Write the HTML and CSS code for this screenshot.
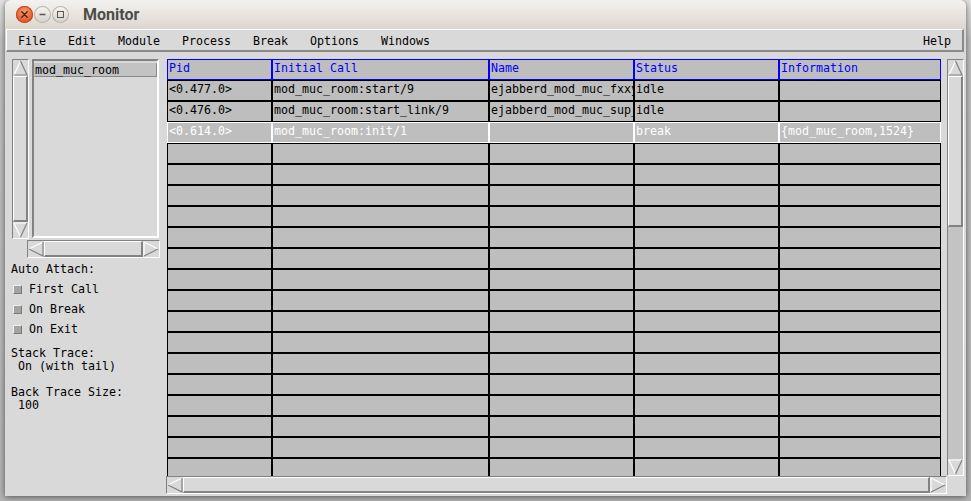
FILE: index.html
```html
<!DOCTYPE html>
<html>
<head>
<meta charset="utf-8">
<title>Monitor</title>
<link rel="stylesheet" href="styles.css">
</head>
<body>
<div class="window">
  <div class="titlebar">
    <span class="wbtn close"><svg width="17" height="17" viewBox="0 0 17 17"><path d="M5.8 5.8 L11.2 11.2 M11.2 5.8 L5.8 11.2" stroke="#4a2414" stroke-width="1.4" stroke-linecap="round"/></svg></span>
    <span class="wbtn"><svg width="17" height="17" viewBox="0 0 17 17"><path d="M5.5 8.5 H11.5" stroke="#5b5853" stroke-width="1.3"/></svg></span>
    <span class="wbtn"><svg width="17" height="17" viewBox="0 0 17 17"><rect x="5.5" y="5.5" width="6" height="6" fill="none" stroke="#5b5853" stroke-width="1"/></svg></span>
    <span class="title">Monitor</span>
  </div>
  <div class="menubar">
    <span class="mi">File</span>
    <span class="mi">Edit</span>
    <span class="mi">Module</span>
    <span class="mi">Process</span>
    <span class="mi">Break</span>
    <span class="mi">Options</span>
    <span class="mi">Windows</span>
    <span class="mi help">Help</span>
  </div>
  <div class="main">
    <div class="left">
      <div class="listrow">
        <div class="sb v small">
          <span class="arrow"><svg width="15" height="16" viewBox="0 0 15 16"><polygon points="7.5,1 1,15 14,15" fill="#d9d9d9"/><path d="M1 15 L7.5 1" stroke="#fff" stroke-width="1.2" fill="none"/><path d="M7.5 1 L14 15 L1 15" stroke="#828282" stroke-width="1.2" fill="none"/></svg></span>
          <span class="thumb fill"></span>
          <span class="arrow"><svg width="15" height="16" viewBox="0 0 15 16"><polygon points="1,1 14,1 7.5,15" fill="#d9d9d9"/><path d="M7.5 15 L1 1 L14 1" stroke="#fff" stroke-width="1.2" fill="none"/><path d="M14 1 L7.5 15" stroke="#828282" stroke-width="1.2" fill="none"/></svg></span>
        </div>
        <div class="listbox"><div class="sel">mod_muc_room</div></div>
      </div>
      <div class="sb h small">
        <span class="arrow"><svg width="16" height="16" viewBox="0 0 16 16"><polygon points="1,8 15,1 15,15" fill="#d9d9d9"/><path d="M1 8 L15 1" stroke="#fff" stroke-width="1.2" fill="none"/><path d="M15 1 L15 15 L1 8" stroke="#828282" stroke-width="1.2" fill="none"/></svg></span>
        <span class="thumb fill"></span>
        <span class="arrow"><svg width="16" height="16" viewBox="0 0 16 16"><polygon points="1,1 15,8 1,15" fill="#d9d9d9"/><path d="M1 15 L1 1 L15 8" stroke="#fff" stroke-width="1.2" fill="none"/><path d="M15 8 L1 15" stroke="#828282" stroke-width="1.2" fill="none"/></svg></span>
      </div>
      <div class="label">Auto Attach:</div>
      <div class="check first"><span class="box"></span>First Call</div>
      <div class="check"><span class="box"></span>On Break</div>
      <div class="check"><span class="box"></span>On Exit</div>
      <div class="info">Stack Trace:
 On (with tail)

Back Trace Size:
 100</div>
    </div>
    <div class="tablearea">
      <div class="table">
        <div class="row head"><div class="cell">Pid</div><div class="cell">Initial Call</div><div class="cell">Name</div><div class="cell">Status</div><div class="cell">Information</div></div>
        <div class="row"><div class="cell">&lt;0.477.0&gt;</div><div class="cell">mod_muc_room:start/9</div><div class="cell">ejabberd_mod_muc_fxxy</div><div class="cell">idle</div><div class="cell"></div></div>
        <div class="row"><div class="cell">&lt;0.476.0&gt;</div><div class="cell">mod_muc_room:start_link/9</div><div class="cell">ejabberd_mod_muc_sup_</div><div class="cell">idle</div><div class="cell"></div></div>
        <div class="row cur"><div class="cell">&lt;0.614.0&gt;</div><div class="cell">mod_muc_room:init/1</div><div class="cell"></div><div class="cell">break</div><div class="cell">{mod_muc_room,1524}</div></div>
        <div class="row"><div class="cell"></div><div class="cell"></div><div class="cell"></div><div class="cell"></div><div class="cell"></div></div>
        <div class="row"><div class="cell"></div><div class="cell"></div><div class="cell"></div><div class="cell"></div><div class="cell"></div></div>
        <div class="row"><div class="cell"></div><div class="cell"></div><div class="cell"></div><div class="cell"></div><div class="cell"></div></div>
        <div class="row"><div class="cell"></div><div class="cell"></div><div class="cell"></div><div class="cell"></div><div class="cell"></div></div>
        <div class="row"><div class="cell"></div><div class="cell"></div><div class="cell"></div><div class="cell"></div><div class="cell"></div></div>
        <div class="row"><div class="cell"></div><div class="cell"></div><div class="cell"></div><div class="cell"></div><div class="cell"></div></div>
        <div class="row"><div class="cell"></div><div class="cell"></div><div class="cell"></div><div class="cell"></div><div class="cell"></div></div>
        <div class="row"><div class="cell"></div><div class="cell"></div><div class="cell"></div><div class="cell"></div><div class="cell"></div></div>
        <div class="row"><div class="cell"></div><div class="cell"></div><div class="cell"></div><div class="cell"></div><div class="cell"></div></div>
        <div class="row"><div class="cell"></div><div class="cell"></div><div class="cell"></div><div class="cell"></div><div class="cell"></div></div>
        <div class="row"><div class="cell"></div><div class="cell"></div><div class="cell"></div><div class="cell"></div><div class="cell"></div></div>
        <div class="row"><div class="cell"></div><div class="cell"></div><div class="cell"></div><div class="cell"></div><div class="cell"></div></div>
        <div class="row"><div class="cell"></div><div class="cell"></div><div class="cell"></div><div class="cell"></div><div class="cell"></div></div>
        <div class="row"><div class="cell"></div><div class="cell"></div><div class="cell"></div><div class="cell"></div><div class="cell"></div></div>
        <div class="row"><div class="cell"></div><div class="cell"></div><div class="cell"></div><div class="cell"></div><div class="cell"></div></div>
        <div class="row"><div class="cell"></div><div class="cell"></div><div class="cell"></div><div class="cell"></div><div class="cell"></div></div>
      </div>
      <div class="sb v big">
        <span class="arrow"><svg width="15" height="16" viewBox="0 0 15 16"><polygon points="7.5,1 1,15 14,15" fill="#d9d9d9"/><path d="M1 15 L7.5 1" stroke="#fff" stroke-width="1.2" fill="none"/><path d="M7.5 1 L14 15 L1 15" stroke="#828282" stroke-width="1.2" fill="none"/></svg></span>
        <span class="thumb vthumb"></span>
        <span class="trough"></span>
        <span class="arrow"><svg width="15" height="16" viewBox="0 0 15 16"><polygon points="1,1 14,1 7.5,15" fill="#d9d9d9"/><path d="M7.5 15 L1 1 L14 1" stroke="#fff" stroke-width="1.2" fill="none"/><path d="M14 1 L7.5 15" stroke="#828282" stroke-width="1.2" fill="none"/></svg></span>
      </div>
      <div class="sb h big">
        <span class="arrow"><svg width="16" height="16" viewBox="0 0 16 16"><polygon points="1,8 15,1 15,15" fill="#d9d9d9"/><path d="M1 8 L15 1" stroke="#fff" stroke-width="1.2" fill="none"/><path d="M15 1 L15 15 L1 8" stroke="#828282" stroke-width="1.2" fill="none"/></svg></span>
        <span class="thumb fill"></span>
        <span class="arrow"><svg width="16" height="16" viewBox="0 0 16 16"><polygon points="1,1 15,8 1,15" fill="#d9d9d9"/><path d="M1 15 L1 1 L15 8" stroke="#fff" stroke-width="1.2" fill="none"/><path d="M15 8 L1 15" stroke="#828282" stroke-width="1.2" fill="none"/></svg></span>
      </div>
      <div class="corner"></div>
    </div>
  </div>
</div>
</body>
</html>
```

FILE: styles.css
```css
html, body {
  margin: 0;
  padding: 0;
}
body {
  width: 971px;
  height: 501px;
  overflow: hidden;
  background: linear-gradient(#e4e4e4 0, #c2c2c2 40px, #b4b4b4 100%);
  font-family: "DejaVu Sans Mono", monospace;
  font-size: 11.63px;
  color: #000;
}
.window {
  margin-left: 5px;
  width: 961px;
  height: 496px;
  background: #d9d9d9;
  border-radius: 6px 6px 0 0;
  box-shadow: 0 1px 6px rgba(0, 0, 0, 0.55);
  overflow: hidden;
}
.titlebar {
  height: 29px;
  display: flex;
  align-items: center;
  padding-left: 11px;
  background: linear-gradient(#f3f2f0, #ddd6cf);
  box-sizing: border-box;
}
.wbtn {
  width: 17px;
  height: 17px;
  border-radius: 50%;
  box-sizing: border-box;
  margin-right: 1px;
  display: flex;
  background: linear-gradient(#f7f6f4, #d5d0ca);
  box-shadow: inset 0 0 0 1px #b9b3ac;
}
.wbtn svg {
  display: block;
}
.wbtn.close {
  background: radial-gradient(circle at 50% 35%, #f89a6c, #e4572a 70%, #d14a1f);
  box-shadow: inset 0 0 0 1px #c2451c;
}
.title {
  margin-left: 13px;
  font-family: Roboto, "DejaVu Sans", sans-serif;
  font-weight: 700;
  font-size: 16px;
  color: #4e4c48;
  line-height: 29px;
}
.menubar {
  display: flex;
  height: 23px;
  box-sizing: border-box;
  margin: 0 2px 0 1px;
  border-style: solid;
  border-width: 1px 2px 2px 1px;
  border-color: #fff #8a8a8a #8a8a8a #fff;
  padding-top: 2px;
  line-height: 18px;
  background: #d9d9d9;
}
.mi {
  padding: 0 11px;
  white-space: nowrap;
}
.mi.help {
  margin-left: auto;
}
.main {
  display: flex;
  height: 444px;
}
.left {
  width: 161px;
  flex: none;
  padding-top: 7px;
  box-sizing: border-box;
}
.listrow {
  display: flex;
  margin-left: 7px;
  height: 180px;
}
.sb {
  box-sizing: border-box;
  border: 1px solid;
  border-color: #828282 #fff #fff #828282;
  display: flex;
  background: #c3c3c3;
}
.sb.v {
  flex-direction: column;
}
.arrow {
  flex: none;
  display: block;
  background: #d9d9d9;
}
.arrow svg {
  display: block;
}
.sb.v .arrow {
  width: 15px;
  height: 16px;
}
.sb.h .arrow {
  width: 16px;
  height: 16px;
}
.thumb {
  display: block;
  box-sizing: border-box;
  background: #d9d9d9;
  border-style: solid;
  border-width: 1px 2px 2px 1px;
  border-color: #fff #828282 #828282 #fff;
}
.thumb.fill {
  flex: 1;
}
.trough {
  flex: 1;
}
.vthumb {
  height: 151px;
  flex: none;
}
.sb.v.small {
  width: 17px;
  height: 180px;
}
.listbox {
  margin-left: 3px;
  width: 127px;
  height: 179px;
  box-sizing: border-box;
  border: 2px solid;
  border-color: #828282 #fff #fff #828282;
  padding-top: 2px;
}
.sel {
  height: 14px;
  box-sizing: border-box;
  border: 1px solid;
  border-color: #c3c3c3 #8a8a8a #8a8a8a #c3c3c3;
  background: #c3c3c3;
  line-height: 12px;
  white-space: nowrap;
}
.sb.h.small {
  margin: 1px 0 0 22px;
  width: 133px;
  height: 18px;
}
.label {
  margin-top: 4px;
  padding-left: 6px;
  line-height: 14px;
}
.check {
  display: flex;
  align-items: center;
  height: 20px;
  line-height: 20px;
  padding-left: 8px;
}
.check.first {
  margin-top: 3px;
}
.box {
  width: 9px;
  height: 9px;
  margin-right: 7px;
  box-sizing: border-box;
  background: #a3a3a3;
  border: 1px solid;
  border-color: #eeeeee #7a7a7a #7a7a7a #eeeeee;
}
.info {
  margin-top: 8px;
  padding-left: 6px;
  line-height: 13px;
  white-space: pre;
}
.tablearea {
  display: grid;
  grid-template-columns: 781px 17px;
  grid-template-rows: 417px 18px;
  padding-top: 7px;
}
.table {
  width: 774px;
  margin-left: 1px;
  height: 417px;
  overflow: hidden;
}
.row {
  display: grid;
  grid-template-columns: 105px 217px 145px 145px 162px;
}
.cell {
  box-sizing: border-box;
  height: 21px;
  border: 1px solid #000;
  background: #bebebe;
  padding: 0 0 3px 1px;
  line-height: 16px;
  white-space: nowrap;
  overflow: hidden;
  color: #000;
}
.head .cell {
  border-color: #0000ff;
  color: #0000ff;
}
.cur .cell {
  border-color: #fff;
  color: #fff;
}
.sb.v.big {
  width: 17px;
  height: 417px;
}
.sb.h.big {
  width: 781px;
  height: 18px;
}
.corner {
  background: #d9d9d9;
}
```
